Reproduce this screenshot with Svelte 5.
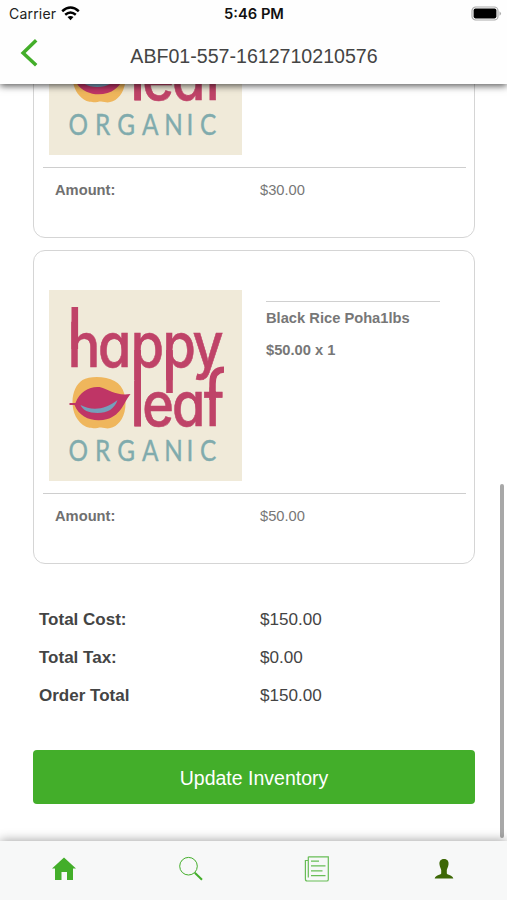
<script>
  const items = [
    { amount: '$30.00' },
    { name: 'Black Rice Poha1lbs', price: '$50.00 x 1', amount: '$50.00' }
  ];
  const totals = [
    ['Total Cost:', '$150.00'],
    ['Total Tax:', '$0.00'],
    ['Order Total', '$150.00']
  ];
</script>

{#snippet logo()}
  <svg class="logo" viewBox="48.5 290 193.5 191" preserveAspectRatio="none">
    <rect x="48" y="290" width="195" height="192" fill="#f0ead9" />
    <path d="M82 380C89 376 105 376 114 381C124 386 127 400 124 412C121 424 112 430 104 428C98 426 96 430 86 427C76 422 72 412 72 402C72 392 76 384 82 380Z" fill="#efb65c" />
    <path d="M69 403L75 403C79 391 90 386 99 387C110 390 115 396 130 394C124 401 121 415 107 419C94 423 79 418 74 405L69 405Z" fill="#bf3566" />
    <path d="M80 405C91 411 105 410 117 400C114 409 107 413 97 413C88 413 82 410 80 405Z" fill="#759fbb" />
    <g class="brand">
      <text transform="scale(.87 1)" y="426.5" x="149.6 162.8 197 233.6">leaf</text>
      <rect x="214.8" y="374" width="14" height="17" fill="#f0ead9" stroke="none" />
      <text transform="scale(.87 1)" y="367" x="77.3 112.1 149.6 186.2 220.6">happy</text>
    </g>
    <g fill="#bf4368">
      <rect x="71" y="307" width="6.6" height="42" />
      <rect x="133.9" y="350" width="6.6" height="76.5" />
      <rect x="165.7" y="350" width="6.6" height="43" />
      <path d="M208.8 400V383Q208.8 366.5 223.5 366.5V372.8Q215.2 373 215.2 384V400Z" />
    </g>
    <text class="organic" transform="scale(.84 1)" y="461" x="81 112.5 139 168.5 195 221.5 237.5">ORGANIC</text>
  </svg>
{/snippet}

<div class="screen">
  <header>
    <div class="status">
      <div class="carrier">
        <span>Carrier</span>
        <svg width="19" height="15" viewBox="0 0 19 15" fill="none" stroke="#000" stroke-width="2.5">
          <path d="M1.2 5.2Q9.5-2.1 17.8 5.2" />
          <path d="M4.2 8.7Q9.5 4.2 14.8 8.7" />
          <path d="M6.5 11.1Q9.5 8.7 12.5 11.1L9.5 14.2Z" fill="#000" stroke="none" />
        </svg>
      </div>
      <b>5:46 PM</b>
      <svg class="battery" width="31" height="15" viewBox="0 0 31 15">
        <rect x="1" y="1" width="26" height="13" rx="3.8" fill="#fff" stroke="#aaa" stroke-width="1.2" />
        <rect x="2.6" y="2.6" width="22.8" height="9.8" rx="1.8" />
        <path d="M28.5 5.2Q31.5 7.5 28.5 9.8Z" fill="#aaa" />
      </svg>
    </div>
    <div class="nav">
      <svg class="back" width="18" height="28" viewBox="0 0 18 28"><path d="M16.2 1.3L3.1 14L16.2 26.3" fill="none" stroke="#43ae2a" stroke-width="3.5" /></svg>
      <h1>ABF01-557-1612710210576</h1>
    </div>
  </header>

  <main>
    {#each items as item}
      <article>
        <div class="product">
          {@render logo()}
          {#if item.name}
            <div class="info">
              <strong>{item.name}</strong>
              <strong>{item.price}</strong>
            </div>
          {/if}
        </div>
        <div class="amount"><b>Amount:</b><span>{item.amount}</span></div>
      </article>
    {/each}
    <div class="totals">
      {#each totals as [label, value]}
        <div class="total"><b>{label}</b><span>{value}</span></div>
      {/each}
    </div>
    <button>Update Inventory</button>
    <i class="scrollbar"></i>
  </main>

  <footer>
    <div class="tab">
      <svg width="26" height="26" viewBox="0 0 26 26" fill="#43ae2a"><path d="M13 1.5L25 12.4H22V24H16V16H10.5V24H4V12.4H1Z" /></svg>
    </div>
    <div class="tab">
      <svg width="26" height="26" viewBox="0 0 26 26" fill="none" stroke="#43ae2a"><circle cx="10.5" cy="10.2" r="8.8" stroke-width="1" /><path d="M16.8 16.8L24 23.7" stroke-width="2" /></svg>
    </div>
    <div class="tab">
      <svg width="26" height="28" viewBox="0 0 26 28" fill="none" stroke="#68bd56" stroke-width="1.2"><path d="M4.3 1.8H24.3V24.4Q24.3 26 22.7 26H3.2Q1.4 26 1.4 24V5.5H4.3M4.3 1.8V22.5M7 6.2H15M7 10.8H21.5M7 15.8H18.5M7 20.7H21.5" /></svg>
    </div>
    <div class="tab">
      <svg width="20" height="22" viewBox="0 0 20 22" fill="#3d6806"><path d="M10 1C13.5 1 14.9 3.4 14.5 6.5C14.2 9.2 13 10.6 12.8 12V15.5C13.4 17.2 18.5 16.8 19.3 20.5H.7C1.5 16.8 6.6 17.2 7.2 15.5V12C7 10.6 5.8 9.2 5.5 6.5C5.1 3.4 6.5 1 10 1Z" /></svg>
    </div>
  </footer>
</div>

<style>
  .screen {
    width: 507px;
    height: 900px;
    display: flex;
    flex-direction: column;
    overflow: hidden;
    background: #fff;
    font-family: "Liberation Sans", Arial, sans-serif;
    color: #444;
  }
  header {
    height: 84px;
    flex: none;
    z-index: 2;
    background: #fefefe;
    box-shadow: 0 2px 7px rgba(0, 0, 0, .65);
  }
  .status {
    height: 27px;
    display: grid;
    grid-template-columns: 1fr auto 1fr;
    align-items: center;
    padding: 0 8px 0 9px;
    font: 14px Inter, sans-serif;
    color: #222;
  }
  .carrier { display: flex; align-items: center; gap: 5px; letter-spacing: .2px; }
  .carrier svg { margin-top: -1px; }
  .status b { font-weight: 600; font-size: 14.7px; color: #111; }
  .battery { justify-self: end; margin-right: -3px; }
  .nav {
    height: 58px;
    display: grid;
    grid-template-columns: 60px 1fr 60px;
    align-items: center;
  }
  .back { margin: -6px 0 0 20px; }
  h1 { margin: 0; padding-left: 1px; text-align: center; font-size: 19.6px; font-weight: 400; }
  main {
    flex: 1;
    min-height: 0;
    position: relative;
    display: flex;
    flex-direction: column;
    justify-content: flex-end;
    overflow: hidden;
    padding: 0 32px 37px 33px;
  }
  article {
    flex: none;
    box-sizing: border-box;
    height: 314px;
    margin-bottom: 12px;
    border: 1.5px solid #d5d5d5;
    border-radius: 12px;
    padding: 39px 8px 0 9px;
    font-size: 14.7px;
    color: #777;
  }
  .product {
    display: flex;
    height: 203px;
    padding-left: 5.5px;
    border-bottom: 1px solid #cecece;
  }
  .logo { width: 193.5px; height: 191px; flex: none; }
  .brand {
    font: 500 62px Inter, sans-serif;
    font-feature-settings: "cv11";
    fill: #bf4368;
    stroke: #bf4368;
    stroke-width: .6px;
  }
  .organic { font: 400 29px Lato, sans-serif; fill: #80abad; stroke: #80abad; stroke-width: .4px; }
  .info {
    width: 174px;
    height: 70px;
    margin: 11px 0 0 24px;
    border-top: 1.5px solid #d0d0d0;
    line-height: 32px;
  }
  .info strong { display: block; }
  .amount { display: grid; grid-template-columns: 205px 1fr; padding: 14px 0 0 12px; }
  .amount b { color: #707070; }
  .totals { padding: 25px 0 0 6px; font-size: 17.1px; }
  .total { display: grid; grid-template-columns: 221px 1fr; line-height: 38px; }
  .total b { font-size: 17px; }
  button {
    flex: none;
    height: 54px;
    margin: 35px 0 0;
    padding: 2px 0 0;
    border: 0;
    border-radius: 4px;
    background: #43ae2a;
    color: #fff;
    font: 19.5px "Liberation Sans", Arial, sans-serif;
  }
  .scrollbar {
    position: absolute;
    right: 3px;
    bottom: 3px;
    width: 4px;
    height: 354px;
    border-radius: 2px;
    background: #a8a8a8;
  }
  footer {
    flex: none;
    z-index: 2;
    height: 59px;
    display: grid;
    grid-template-columns: repeat(4, 1fr);
    background: #f7f8f8;
    box-shadow: 0 -1px 10px rgba(0, 0, 0, .35);
  }
  .tab { height: 55px; display: flex; align-items: center; justify-content: center; padding-left: 1px; }
</style>
